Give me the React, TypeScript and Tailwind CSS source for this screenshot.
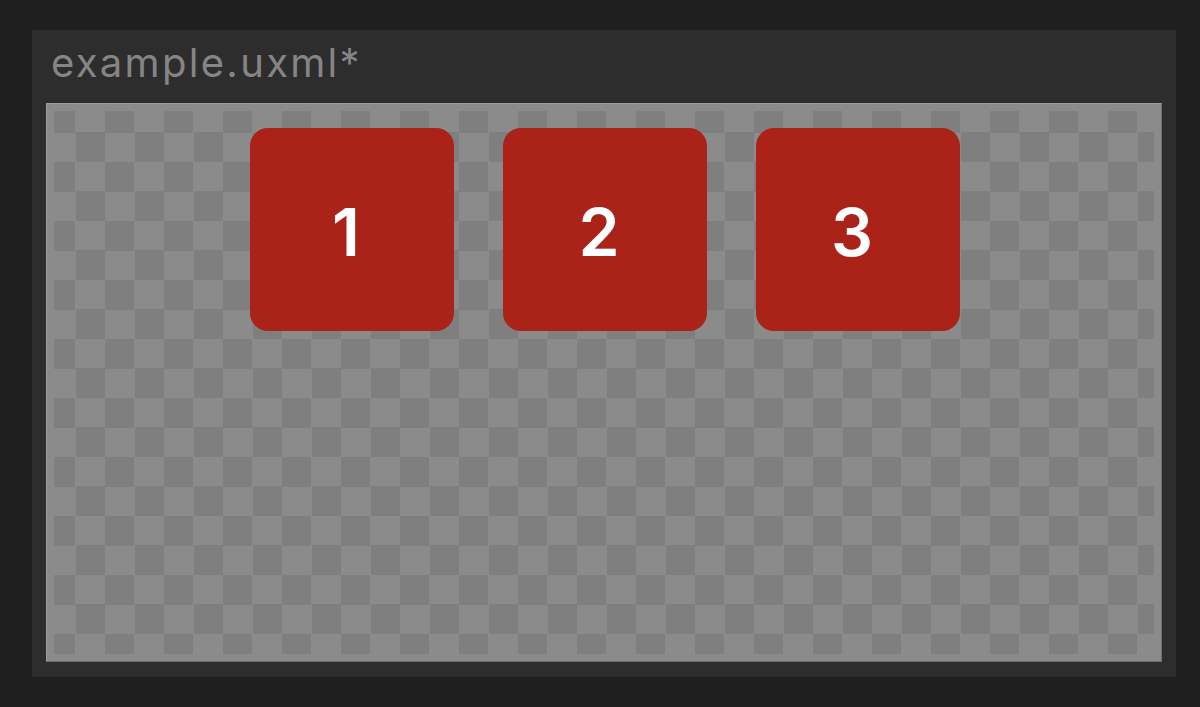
export default function App() {
  const tiles = ["1", "2", "3"];

  return (
    <div className="w-[1200px] h-[707px] bg-[#1f1f1f] pt-[30px] pl-[32px] font-['Inter',sans-serif]">
      {/* Panel */}
      <div className="w-[1144px] h-[647px] bg-[#2d2d2d] flex flex-col px-[14px] pb-[15px]">
        <div className="h-[73px] pl-[5px] pt-[9px] text-[40px] leading-[48px] text-[#858585] tracking-[2.3px]">
          example.uxml*
        </div>

        {/* Canvas */}
        <div className="flex-1 border border-t-[#9c9c9c] border-l-[#9c9c9c] border-r-[#6e6e6e] border-b-[#6e6e6e] bg-[#8b8b8b] p-[7px]">
          <div className="h-full bg-[conic-gradient(#8b8b8b_25%,#7f7f7f_0_50%,#8b8b8b_0_75%,#7f7f7f_0)] bg-[length:59px_59px] bg-[position:-8px_-8px] flex justify-center items-start gap-[49px] pt-[17px] pl-[2px]">
            {tiles.map((t) => (
              <div
                key={t}
                className="w-[204px] h-[203px] rounded-[18px] bg-[#ab2218] flex items-center justify-center pr-[12px] pt-[4px] text-white text-[66px] font-semibold leading-none"
              >
                {t}
              </div>
            ))}
          </div>
        </div>
      </div>
    </div>
  );
}
